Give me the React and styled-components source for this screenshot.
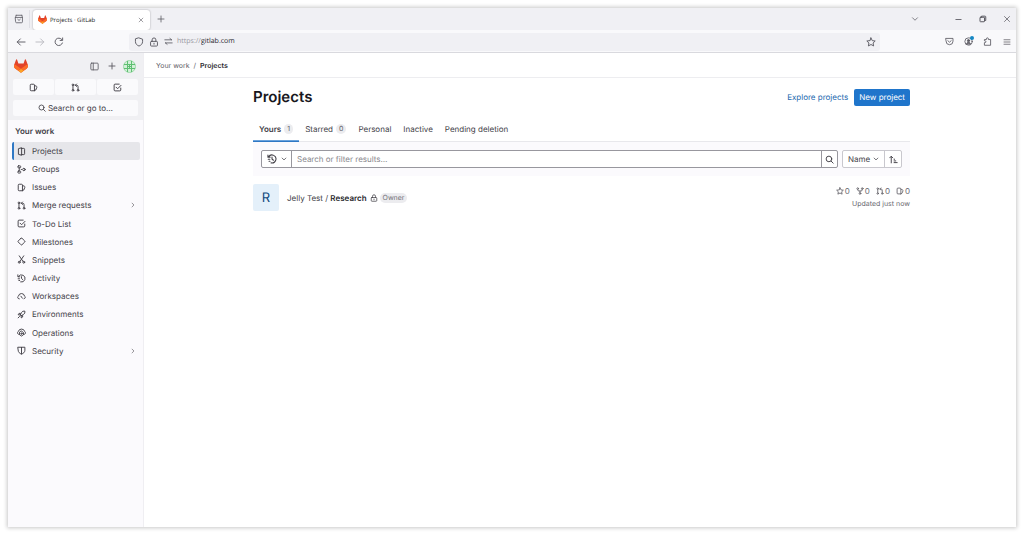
import React from 'react';
import styled, { createGlobalStyle, css } from 'styled-components';

const Global = createGlobalStyle`
  *, *::before, *::after { box-sizing: border-box; }
  body { margin: 0; background: #fff; color: #434148; font: 400 8px/12px Inter, "Liberation Sans", sans-serif; text-rendering: geometricPrecision; }
  button, input, select { font: inherit; color: inherit; margin: 0; padding: 0; border: 0; background: none; text-rendering: inherit; }
  a { color: inherit; text-decoration: none; }
  ul { list-style: none; margin: 0; padding: 0; }
  h1, h2, p { margin: 0; }
`;

/* ---------- icons ---------- */

const Svg = styled.svg`
  display: block;
  flex: none;
  width: ${p => p.$size}px;
  height: ${p => p.$size}px;
  fill: none;
  stroke: currentColor;
  stroke-width: ${p => p.$weight};
  stroke-linecap: round;
  stroke-linejoin: round;
`;

const drawings = {
  project: <><path d="M7.5 1.5 2.5 3v10l5 1.500z" /><path d="M7.500 2.500h4.500a1.500 1.500 0 0 1 1.500 1.500v8a1.500 1.500 0 0 1-1.500 1.500H7.500" /></>,
  group: <><rect x="1.500" y="1.500" width="5" height="3.500" rx="1" /><rect x="1.500" y="10.800" width="5" height="3.500" rx="1" /><circle cx="12.300" cy="8" r="2.200" /><path d="M4 5v5.500M7.500 8h.5" /></>,
  issues: <><path d="M9.500 13.800H4A1.700 1.700 0 0 1 2.200 12V4A1.700 1.700 0 0 1 4 2.200h4A1.700 1.700 0 0 1 9.700 4v9.500" /><path d="m10 4.500 3.200 1.300a1.400 1.400 0 0 1 .8 1.800L12 12.500l-2.300 1.200" /></>,
  merge: <><circle cx="3.500" cy="3.300" r="1.500" /><circle cx="3.500" cy="13" r="1.500" /><circle cx="12.500" cy="13" r="1.500" /><path d="M3.500 4.800v6.700M12.500 11.500V6.300a2.300 2.300 0 0 0-2.300-2.300H8M9.800 1.800 7.600 4l2.200 2.200" /></>,
  todo: <><path d="M13.800 9v3.300a1.700 1.700 0 0 1-1.700 1.700H3.700A1.700 1.700 0 0 1 2 12.300V3.700A1.700 1.700 0 0 1 3.700 2H11" /><path d="m5.500 7.500 2.700 2.700 6-6" /></>,
  milestone: <path d="m7 2.300-4.800 4.800a1.300 1.300 0 0 0 0 1.800L7 13.700a1.300 1.300 0 0 0 1.900 0l4.900-4.800a1.300 1.300 0 0 0 0-1.800L8.900 2.300a1.300 1.300 0 0 0-1.900 0z" />,
  snippet: <><path d="m4 1.500 6.800 10M12 1.500l-6.800 10" /><circle cx="4" cy="12.800" r="1.700" /><circle cx="12" cy="12.800" r="1.700" /></>,
  history: <><path d="M2.500 4.500A6.400 6.400 0 1 1 6.500 14.200M1.500 1.500v3.500H5M8 4.800V8l2.300 2M2 8.500h2.500M3.300 11.500h1.500" /></>,
  workspaces: <><path d="M4 12.300A3 3 0 0 1 1.200 9.500 3 3 0 0 1 2.800 7a5.300 5.300 0 0 1 10.400 0 3 3 0 0 1 1.600 2.500A3 3 0 0 1 12.500 12" /><path d="m7 7.500 2.500 3.500" /></>,
  environment: <><path d="M6 8.500 8 4.500A5.500 5.500 0 0 1 14 2a5.500 5.500 0 0 1-2.500 6L7.500 10z" /><path d="M6 6H3.500L2 8.500l3.500.2M10 10v2.500L7.500 14v-3.500M4.500 11.500l-2.500 2.500" /></>,
  operations: <><path d="M4 11.500a2.800 2.800 0 0 1-1.800-5.100 6 6 0 0 1 11.600 0A2.800 2.800 0 0 1 12 11.500" /><path d="M8 5.500 11.500 8v4L8 14.300 4.500 12V8z" /><circle cx="8" cy="10" r="1.200" /></>,
  shield: <><path d="M2 2.200h12v5.500c0 3.500-3 5.500-6 6.800-3-1.300-6-3.300-6-6.800z" /><path d="M8 2.500v11.500" /></>,
  urlShield: <path d="M8 1.500 13.700 3.500v4c0 3.500-2.500 5.700-5.700 7-3.200-1.300-5.700-3.500-5.700-7v-4z" />,
  lock: <><rect x="2.500" y="7" width="11" height="7.500" rx="1.300" /><path d="M5 7V4.500a3 3 0 0 1 6 0V7M8 10v1.500" /></>,
  swap: <path d="M1.500 5h12M10.500 2.500 13.500 5M14.500 10.500h-12M5.500 13l-3-2.500" />,
  search: <><circle cx="7" cy="7" r="5" /><path d="m11 11 3.500 3.500" /></>,
  panel: <><rect x="1.500" y="2" width="13" height="12" rx="1.500" /><path d="M5.800 2v12" /></>,
  plus: <path d="M8 2v12M2 8h12" />,
  close: <path d="m3 3 10 10M13 3 3 13" />,
  back: <path d="M14.500 8H2M7 3 2 8l5 5" />,
  forward: <path d="M1.500 8H14M9 3l5 5-5 5" />,
  reload: <path d="M13.500 9.500A6 6 0 1 1 12.500 4M13.800 1.500v4h-4" />,
  down: <path d="m3 5.500 5 5 5-5" />,
  right: <path d="m5.500 3 5 5-5 5" />,
  minimise: <path d="M2 8h12" />,
  restore: <><rect x="2" y="4.500" width="9" height="9" rx="1" /><path d="M5 4.500V2.300h7a1.500 1.500 0 0 1 1.500 1.500V11H11" /></>,
  star: <path d="m8 1.500 2 4.300 4.700.6-3.400 3.200.9 4.700L8 12l-4.200 2.300.9-4.700L1.300 6.400 6 5.800z" />,
  fork: <><circle cx="3.500" cy="3.200" r="1.700" /><circle cx="12.500" cy="3.200" r="1.700" /><circle cx="8" cy="13" r="1.700" /><path d="M3.500 5v.5A2.500 2.500 0 0 0 6 8h4a2.500 2.500 0 0 0 2.500-2.500V5M8 8v3.200" /></>,
  sort: <path d="M4 14V2.500M1.300 5 4 2.300 6.700 5M9 7.500h1M9 10.500h3M9 13.500h5.500" />,
  pocket: <><path d="M1.800 2.500h12.400v5a6.200 6.200 0 0 1-12.400 0z" /><path d="m5 6.500 3 2.700 3-2.700" /></>,
  account: <><circle cx="8" cy="8" r="6.500" /><circle cx="8" cy="6.500" r="2" fill="currentColor" /><path d="M4.500 12a3.700 3.700 0 0 1 7 0z" fill="currentColor" /></>,
  puzzle: <path d="M2.500 14V10h1a1.600 1.600 0 0 0 0-3.300h-1V4.500H6V3.300a1.800 1.800 0 0 1 3.600 0v1.200h3.900V14z" />,
  menu: <path d="M2 3.500h12M2 8h12M2 12.500h12" />,
  tabs: <><path d="M2.500 5.500h11v7a1.500 1.500 0 0 1-1.500 1.500H4a1.500 1.500 0 0 1-1.500-1.500zM3.500 2h9M6 8.500l2 1.800 2-1.800" /><path d="M2.500 5.500 3.500 2M13.500 5.500l-1-3.500" /></>,
};

const Icon = ({ name, size = 10, weight = 1.5 }) => (
  <Svg viewBox="0 0 16 16" $size={size} $weight={weight} aria-hidden="true">{drawings[name]}</Svg>
);

const LogoSvg = styled.svg`
  display: block;
  flex: none;
  width: ${p => p.$size}px;
  height: ${p => p.$size}px;
`;

const Logo = ({ size }) => (
  <LogoSvg viewBox="0 0 25 24" $size={size} aria-hidden="true">
    <path fill="#E24329" d="m24.507 9.500-.034-.090L21.082.562a.896.896 0 0 0-1.694.091l-2.290 7.010H7.825L5.535.653a.898.898 0 0 0-1.694-.090L.451 9.411.416 9.500a6.297 6.297 0 0 0 2.090 7.278l.012.010.030.022 5.160 3.867 2.560 1.935 1.554 1.176a1.051 1.051 0 0 0 1.268 0l1.555-1.176 2.560-1.935 5.197-3.890.014-.010A6.297 6.297 0 0 0 24.507 9.500Z" />
    <path fill="#FC6D26" d="m24.507 9.500-.034-.090a11.440 11.440 0 0 0-4.560 2.051l-7.447 5.632 4.742 3.584 5.197-3.890.014-.010A6.297 6.297 0 0 0 24.507 9.500Z" />
    <path fill="#FCA326" d="m7.707 20.677 2.560 1.935 1.555 1.176a1.051 1.051 0 0 0 1.268 0l1.555-1.176 2.560-1.935-4.743-3.584-4.755 3.584Z" />
    <path fill="#FC6D26" d="M5.010 11.461a11.430 11.430 0 0 0-4.560-2.050L.416 9.500a6.297 6.297 0 0 0 2.090 7.278l.012.010.030.022 5.160 3.867 4.745-3.584-7.444-5.632Z" />
  </LogoSvg>
);

const AvatarSvg = styled.svg`
  display: block;
  width: 13px;
  height: 13px;
`;

/* ---------- browser window ---------- */

const Window = styled.div`
  margin: 8px;
  min-height: calc(100vh - 17px);
  display: flex;
  flex-direction: column;
  background: #fff;
  box-shadow: 0 0 4px 1px rgba(0, 0, 0, 0.22);
`;

const IconButton = styled.button`
  display: grid;
  place-items: center;
  flex: none;
  width: ${p => p.$w || 19}px;
  height: 18px;
  position: relative;
  color: ${p => (p.$faint ? '#b9b9bf' : '#5b5a62')};
`;

const TabStrip = styled.div`
  display: flex;
  align-items: center;
  height: 22px;
  background: #f0f0f4;
`;

const TabsCell = styled.div`
  display: flex;
  justify-content: center;
  width: 22px;
  border-right: 1px solid #e0e0e6;
`;

const BrowserTab = styled.div`
  display: flex;
  align-items: center;
  gap: 3px;
  width: 117px;
  height: 20px;
  margin: 1px 1px 0 3px;
  padding-left: 5px;
  background: #fff;
  border-radius: 3px;
  box-shadow: 0 0 2px rgba(0, 0, 0, 0.35);
  font: 6px/12px "Open Sans", sans-serif;
  color: #222;
`;

const TabTitle = styled.span`
  flex: 1;
  white-space: nowrap;
`;

const WindowControls = styled.div`
  display: flex;
  align-items: center;
  margin-left: auto;
  gap: 5px;
`;

const ControlGap = styled.span`
  width: 15px;
`;

const Toolbar = styled.div`
  display: flex;
  align-items: center;
  height: 23px;
  padding: 1px 0 0 3px;
  background: #f9f9fb;
  border-bottom: 1px solid #d9d9de;
`;

const UrlBar = styled.label`
  flex: 1;
  display: flex;
  align-items: center;
  height: 18px;
  margin: 0 60px 0 61px;
  padding-left: 2px;
  border-radius: 3px;
  background: #f0f0f4;
  color: #5b5a62;
  font: 7px/14px "Open Sans", sans-serif;
`;

const Scheme = styled.span`
  margin-left: 1px;
  color: #96959d;
`;

const UrlInput = styled.input`
  flex: 1;
  min-width: 0;
  height: 14px;
  color: #29282f;
  outline: 0;
`;

const Notice = styled.span`
  position: absolute;
  top: 3px;
  right: 4px;
  width: 4px;
  height: 4px;
  border-radius: 50%;
  background: #1688c4;
`;

/* ---------- sidebar ---------- */

const Body = styled.div`
  flex: 1;
  display: flex;
`;

const Sidebar = styled.aside`
  flex: none;
  width: 136px;
  background: #fbfafd;
  border-right: 1px solid #efeef2;
`;

const SidebarTop = styled.div`
  height: 67px;
  padding: 3px 5px 0 5px;
  background: #f0f0f3;
`;

const BrandRow = styled.div`
  display: flex;
  align-items: center;
  height: 20px;
  padding-left: 1px;
`;

const BrandLink = styled.a`
  margin-right: auto;
`;

const Counters = styled.div`
  display: grid;
  grid-template-columns: repeat(3, 1fr);
  gap: 1px;
  margin-top: 3px;
`;

const softBox = css`
  display: flex;
  align-items: center;
  justify-content: center;
  background: #fafafc;
  border-radius: 2px;
  color: #434148;
`;

const Counter = styled.a`
  ${softBox}
  height: 16px;
`;

const SearchButton = styled.button`
  ${softBox}
  gap: 2px;
  width: 100%;
  height: 16px;
  margin-top: 5px;
`;

const NavTitle = styled.h2`
  padding: 5px 7px;
  font-size: 8px;
  line-height: 12px;
  font-weight: 600;
`;

const NavList = styled.ul`
  display: grid;
  grid-auto-rows: 1fr;
  height: 218px;
  padding: 0 3px 0 4px;
`;

const NavLink = styled.a`
  display: flex;
  align-items: center;
  gap: 6px;
  height: 18px;
  padding: 0 4px 0 3px;
  border-left: 2px solid ${p => (p.$active ? '#2f78c4' : 'transparent')};
  border-radius: 2px;
  background: ${p => (p.$active ? '#e6e6ea' : 'none')};
`;

const NavText = styled.span`
  flex: 1;
`;

/* ---------- page ---------- */

const Page = styled.div`
  flex: 1;
  min-width: 0;
`;

const Breadcrumbs = styled.nav`
  display: flex;
  align-items: center;
  gap: 4px;
  height: 25px;
  padding: 2px 12px 0;
  border-bottom: 1px solid #ededf0;
  font-size: 7px;
  color: #626168;
`;

const Current = styled.a`
  font-weight: 600;
  color: #28272d;
`;

const Main = styled.main`
  max-width: 660px;
  margin: 0 auto;
  padding: 10px 0 0 3px;
`;

const Heading = styled.header`
  display: flex;
  align-items: center;
  gap: 6px;
  height: 18px;
`;

const Title = styled.h1`
  margin-right: auto;
  font-size: 15px;
  line-height: 20px;
  font-weight: 600;
  color: #18171d;
`;

const ExploreLink = styled.a`
  color: #2268ae;
`;

const PrimaryButton = styled.button`
  height: 17px;
  padding: 0 5px;
  border-radius: 2px;
  background: #1f75cb;
  color: #fff;
`;

const Tabs = styled.nav`
  display: flex;
  margin-top: 10px;
  border-bottom: 1px solid #e8e8ec;
`;

const Tab = styled.a`
  display: flex;
  align-items: center;
  gap: 3px;
  height: 25px;
  padding: 0 6px;
  font-weight: ${p => (p.$active ? 600 : 400)};
  box-shadow: ${p => (p.$active ? 'inset 0 -1px #6ba3dc, 0 1px #2f78c4' : 'none')};
`;

const Badge = styled.span`
  padding: 0 3px;
  border-radius: 5px;
  background: #ececef;
  color: #626168;
  font-weight: 400;
  font-size: 7px;
  line-height: 10px;
`;

const FilterBar = styled.div`
  display: flex;
  gap: 4px;
  padding: 8px;
  background: #fbfafd;
`;

const Filter = styled.form`
  flex: 1;
  display: flex;
  height: 18px;
  border: 1px solid #98979e;
  border-radius: 2px;
  background: #fff;
`;

const HistoryButton = styled.button`
  display: flex;
  align-items: center;
  justify-content: center;
  gap: 4px;
  width: 30px;
  border-right: 1px solid #98979e;
`;

const FilterInput = styled.input`
  flex: 1;
  min-width: 0;
  padding: 0 5px;
  outline: 0;
  &::placeholder { color: #89888d; opacity: 1; }
`;

const SubmitButton = styled.button`
  display: grid;
  place-items: center;
  width: 16px;
  border-left: 1px solid #98979e;
`;

const Sort = styled.div`
  display: flex;
  height: 18px;
  border: 1px solid #c9c8ce;
  border-radius: 2px;
  background: #fff;
`;

const SelectWrap = styled.label`
  display: grid;
  grid-template-columns: 1fr 16px;
  align-items: center;
  width: 42px;
  border-right: 1px solid #c9c8ce;
`;

const SortSelect = styled.select`
  grid-area: 1 / 1 / 2 / 3;
  width: 100%;
  height: 16px;
  padding-left: 5px;
  appearance: none;
  outline: 0;
`;

const SelectArrow = styled.span`
  grid-area: 1 / 2;
  justify-self: center;
  pointer-events: none;
`;

const DirectionButton = styled.button`
  display: grid;
  place-items: center;
  width: 16px;
`;

const ProjectRow = styled.li`
  display: flex;
  align-items: center;
  margin-top: 8px;
`;

const ProjectAvatar = styled.span`
  display: grid;
  place-items: center;
  width: 26px;
  height: 27px;
  margin-right: 8px;
  border-radius: 2px;
  background: #e4f0fa;
  color: #0f4a7d;
  font-size: 13px;
`;

const ProjectName = styled.a`
  margin-right: 3px;
  b { font-weight: 600; color: #28272d; }
`;

const Role = styled.span`
  margin-left: 2px;
  padding: 0 3px;
  border-radius: 5px;
  background: #ececef;
  color: #737278;
  font-size: 7px;
  line-height: 10px;
`;

const Meta = styled.div`
  margin-left: auto;
  text-align: right;
  color: #6b6a71;
`;

const Stats = styled.div`
  display: flex;
  justify-content: flex-end;
  gap: 6px;
`;

const Stat = styled.a`
  display: flex;
  align-items: center;
  gap: 1px;
`;

const Updated = styled.p`
  font-size: 7px;
  line-height: 14px;
`;

const navItems = [
  ['project', 'Projects'],
  ['group', 'Groups'],
  ['issues', 'Issues'],
  ['merge', 'Merge requests', true],
  ['todo', 'To-Do List'],
  ['milestone', 'Milestones'],
  ['snippet', 'Snippets'],
  ['history', 'Activity'],
  ['workspaces', 'Workspaces'],
  ['environment', 'Environments'],
  ['operations', 'Operations'],
  ['shield', 'Security', true],
];

const tabItems = [['Yours', 1], ['Starred', 0], ['Personal'], ['Inactive'], ['Pending deletion']];

export default function App() {
  return (
    <>
      <Global />
      <Window>
        <TabStrip>
          <TabsCell><IconButton aria-label="Recent tabs"><Icon name="tabs" weight={1.3} /></IconButton></TabsCell>
          <BrowserTab>
            <Logo size={9} />
            <TabTitle>Projects · GitLab</TabTitle>
            <IconButton aria-label="Close tab"><Icon name="close" size={6} /></IconButton>
          </BrowserTab>
          <IconButton aria-label="New tab"><Icon name="plus" size={8} weight={1.6} /></IconButton>
          <WindowControls>
            <IconButton aria-label="List all tabs"><Icon name="down" size={8} /></IconButton>
            <ControlGap />
            <IconButton aria-label="Minimise"><Icon name="minimise" size={7} weight={2} /></IconButton>
            <IconButton aria-label="Restore"><Icon name="restore" size={8} weight={2} /></IconButton>
            <IconButton aria-label="Close window"><Icon name="close" size={8} /></IconButton>
          </WindowControls>
        </TabStrip>
        <Toolbar>
          <IconButton aria-label="Back"><Icon name="back" /></IconButton>
          <IconButton aria-label="Forward" $faint><Icon name="forward" /></IconButton>
          <IconButton aria-label="Reload"><Icon name="reload" /></IconButton>
          <UrlBar>
            <IconButton as="span" $w={15}><Icon name="urlShield" /></IconButton>
            <IconButton as="span" $w={15}><Icon name="lock" /></IconButton>
            <IconButton as="span" $w={15}><Icon name="swap" size={9} /></IconButton>
            <Scheme>https://</Scheme>
            <UrlInput aria-label="Address" defaultValue="gitlab.com" />
            <IconButton aria-label="Bookmark this page"><Icon name="star" /></IconButton>
          </UrlBar>
          <IconButton aria-label="Save to Pocket"><Icon name="pocket" size={9} /></IconButton>
          <IconButton aria-label="Account"><Icon name="account" size={9} /><Notice /></IconButton>
          <IconButton aria-label="Extensions"><Icon name="puzzle" size={9} /></IconButton>
          <IconButton aria-label="Menu"><Icon name="menu" size={8} /></IconButton>
        </Toolbar>
        <Body>
          <Sidebar>
            <SidebarTop>
              <BrandRow>
                <BrandLink href="#" aria-label="Homepage"><Logo size={14} /></BrandLink>
                <IconButton aria-label="Toggle sidebar" $w={18}><Icon name="panel" size={9} /></IconButton>
                <IconButton aria-label="Create new" $w={18}><Icon name="plus" size={8} weight={1.8} /></IconButton>
                <IconButton aria-label="User menu" $w={17}>
                  <AvatarSvg viewBox="0 0 13 13">
                    <circle cx="6.500" cy="6.500" r="6" fill="#d3efd8" stroke="#9ad9a6" />
                    <path
                      d="M4.500 1v11M8.500 1v11M1 4.500h11M1 8.500h11M6.500 4.500v4M4.500 6.500h4"
                      fill="none"
                      stroke="#5fbf72"
                    />
                  </AvatarSvg>
                </IconButton>
              </BrandRow>
              <Counters>
                <Counter href="#" aria-label="Issues"><Icon name="issues" size={9} weight={1.7} /></Counter>
                <Counter href="#" aria-label="Merge requests"><Icon name="merge" size={9} weight={1.7} /></Counter>
                <Counter href="#" aria-label="To-Do List"><Icon name="todo" size={9} weight={1.7} /></Counter>
              </Counters>
              <SearchButton><Icon name="search" size={8} weight={1.7} />Search or go to…</SearchButton>
            </SidebarTop>
            <NavTitle>Your work</NavTitle>
            <NavList>
              {navItems.map(([icon, label, more], i) => (
                <li key={label}>
                  <NavLink href="#" $active={i === 0}>
                    <Icon name={icon} size={9} weight={1.7} />
                    <NavText>{label}</NavText>
                    {more && <Icon name="right" size={6} />}
                  </NavLink>
                </li>
              ))}
            </NavList>
          </Sidebar>
          <Page>
            <Breadcrumbs aria-label="Breadcrumb">
              <a href="#">Your work</a><span>/</span><Current href="#">Projects</Current>
            </Breadcrumbs>
            <Main>
              <Heading>
                <Title>Projects</Title>
                <ExploreLink href="#">Explore projects</ExploreLink>
                <PrimaryButton>New project</PrimaryButton>
              </Heading>
              <Tabs>
                {tabItems.map(([label, count], i) => (
                  <Tab key={label} href="#" $active={i === 0}>
                    {label}
                    {count !== undefined && <Badge>{count}</Badge>}
                  </Tab>
                ))}
              </Tabs>
              <FilterBar>
                <Filter>
                  <HistoryButton type="button" aria-label="Recent searches">
                    <Icon name="history" size={10} weight={1.7} /><Icon name="down" size={6} weight={2} />
                  </HistoryButton>
                  <FilterInput aria-label="Search or filter results" placeholder="Search or filter results…" />
                  <SubmitButton type="button" aria-label="Search"><Icon name="search" size={9} weight={1.7} /></SubmitButton>
                </Filter>
                <Sort>
                  <SelectWrap>
                    <SortSelect aria-label="Sort by"><option>Name</option></SortSelect>
                    <SelectArrow><Icon name="down" size={6} weight={2} /></SelectArrow>
                  </SelectWrap>
                  <DirectionButton aria-label="Sort direction"><Icon name="sort" size={9} weight={1.7} /></DirectionButton>
                </Sort>
              </FilterBar>
              <ul>
                <ProjectRow>
                  <ProjectAvatar>R</ProjectAvatar>
                  <ProjectName href="#">Jelly Test / <b>Research</b></ProjectName>
                  <Icon name="lock" size={8} />
                  <Role>Owner</Role>
                  <Meta>
                    <Stats>
                      {['star', 'fork', 'merge', 'issues'].map(name => (
                        <Stat key={name} href="#"><Icon name={name} size={8} weight={1.8} />0</Stat>
                      ))}
                    </Stats>
                    <Updated>Updated just now</Updated>
                  </Meta>
                </ProjectRow>
              </ul>
            </Main>
          </Page>
        </Body>
      </Window>
    </>
  );
}
